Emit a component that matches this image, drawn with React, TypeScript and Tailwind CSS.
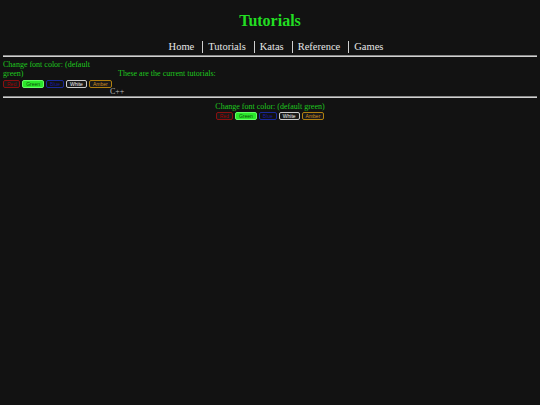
import React from "react";

function ColorButtons() {
  return (
    <div className="flex gap-[2px] font-['Liberation_Sans',Arial,sans-serif] text-[5px] leading-[6px]">
      <span className="rounded-[2px] border border-[#8a1010] bg-[#1a1a1a] px-[3px] text-[#a00000]">Red</span>
      <span className="rounded-[2px] border border-[#66ff66] bg-[#2ae82a] px-[3px] text-[#0a4a0a]">Green</span>
      <span className="rounded-[2px] border border-[#1a2a9a] bg-[#111] px-[3px] text-[#1a1aa0]">Blue</span>
      <span className="rounded-[2px] border border-[#cccccc] bg-[#1a1a1a] px-[3px] text-[#eeeeee]">White</span>
      <span className="rounded-[2px] border border-[#b08010] bg-[#1a1a1a] px-[3px] text-[#d09020]">Amber</span>
    </div>
  );
}

function Rule() {
  return <div className="mx-[3px] h-[2px] border-t border-t-[#8a8a8a] border-b border-b-[#d0d0d0]" />;
}

export default function App() {
  const nav = ["Home", "Tutorials", "Katas", "Reference", "Games"];
  return (
    <div className="min-h-[405px] w-full bg-[#121212] font-['Liberation_Serif','Times_New_Roman',serif]">
      <h1 className="pt-[12px] text-center text-[16px] font-bold leading-[18px] text-[#22dd22]">Tutorials</h1>
      <nav className="mt-[11px] flex justify-center pl-[12px] text-[10.5px] leading-[12px] text-[#e6e6e6]">
        {nav.map((n, i) => (
          <div key={n} className="flex items-center">
            {i > 0 && <span className="ml-[8px] mr-[5px] h-[12px] w-px bg-[#cfcfcf]" />}
            <span>{n}</span>
          </div>
        ))}
      </nav>
      <div className="mt-[2px]">
        <Rule />
      </div>
      <div className="flex pl-[3px] pt-[3px] text-[8px] leading-[9px] text-[#1fc81f]">
        <div className="w-[107px]">
          <div>Change font color: (default green)</div>
          <div className="mt-[2px]">
            <ColorButtons />
          </div>
        </div>
        <div className="flex flex-col">
          <div className="mt-[9px] pl-[8px]">These are the current tutorials:</div>
          <div className="mt-[9px] text-[#bdbdbd]">C++</div>
        </div>
      </div>
      <Rule />
      <div className="mt-[4px] flex flex-col items-center text-[8px] leading-[9px] text-[#1fc81f]">
        <div>Change font color: (default green)</div>
        <div className="mt-px">
          <ColorButtons />
        </div>
      </div>
    </div>
  );
}
